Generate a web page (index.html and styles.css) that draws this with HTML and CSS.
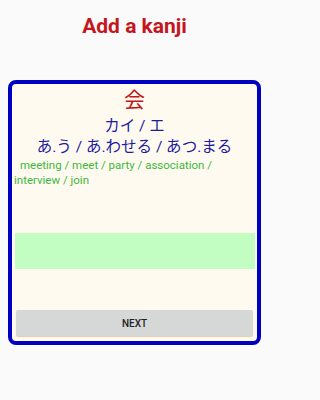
FILE: index.html
```html
<!DOCTYPE html>
<html lang="en">
<head>
<meta charset="utf-8">
<title>Add a kanji</title>
<link rel="stylesheet" href="styles.css">
</head>
<body>
<h1 class="title">Add a kanji</h1>
<div class="card">
  <div class="kanji">会</div>
  <div class="onyomi">カイ / エ</div>
  <div class="kunyomi">あ.う / あ.わせる / あつ.まる</div>
  <div class="meaning">meeting / meet / party / association / interview / join</div>
  <div class="answer"></div>
  <button class="next">NEXT</button>
</div>
</body>
</html>
```
FILE: styles.css
```css
html, body {
  margin: 0;
  padding: 0;
  background: #fafafa;
}
body {
  font-family: Roboto, "Noto Sans CJK JP", sans-serif;
  width: 269px;
  height: 400px;
}
.title {
  margin: 13px 0 0;
  font-size: 21px;
  line-height: 26px;
  font-weight: 700;
  color: #c4161c;
  text-align: center;
}
.card {
  margin: 41px 8px 0;
  border: 4px solid #0000c0;
  border-radius: 8px;
  background: #fffaf0;
  display: flex;
  flex-direction: column;
  padding-bottom: 5px;
}
.kanji {
  font-family: "Noto Sans CJK JP", sans-serif;
  font-size: 21px;
  line-height: 28px;
  color: #c01818;
  text-align: center;
}
.onyomi, .kunyomi {
  font-family: Roboto, "Noto Sans CJK JP", sans-serif;
  font-size: 15.5px;
  line-height: 20px;
  color: #1c1c9e;
  text-align: center;
}
.onyomi {
  margin-top: 4px;
  line-height: 21px;
}
.meaning {
  font-size: 11.5px;
  line-height: 14.5px;
  height: 31px;
  padding: 1px 2px 0 2px;
  color: #3cb83c;
  text-indent: 6px;
}
.answer {
  margin: 44px 2px 0 3px;
  height: 36px;
  background: #c2fdc2;
}
.next {
  margin: 41px 4px 0;
  height: 26px;
  border: none;
  border-radius: 2px;
  background: #d6d7d7;
  box-shadow: 0 1px 1px rgba(160, 130, 60, 0.35);
  font-family: Roboto, sans-serif;
  font-weight: 500;
  font-size: 10px;
  color: #222;
  padding: 0;
}
```
